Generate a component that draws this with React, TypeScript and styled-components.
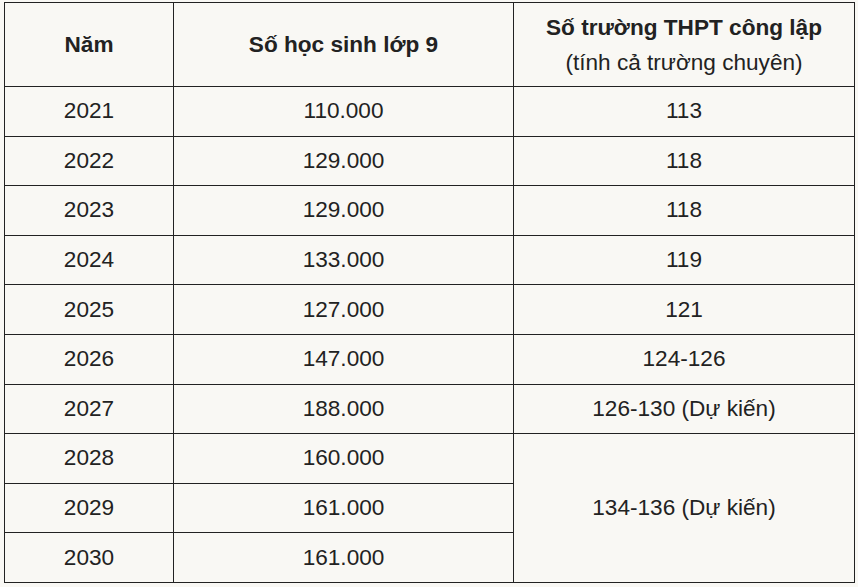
import React from "react";
import styled, { createGlobalStyle } from "styled-components";

const GlobalStyle = createGlobalStyle`
  html, body {
    margin: 0;
    padding: 0;
    background: #f9f8f4;
  }
  body {
    font-family: "Liberation Sans", Arial, sans-serif;
    color: #222;
  }
`;

const Wrapper = styled.div`
  width: 858px;
  height: 587px;
  padding: 2px 0 0 4px;
  box-sizing: border-box;
`;

const Table = styled.table`
  width: 850px;
  border-collapse: collapse;
  table-layout: fixed;
  font-size: 22.6px;
`;

const Col = styled.col<{ $w: number }>`
  width: ${(p) => p.$w}px;
`;

const HeadCell = styled.th`
  border: 1px solid #222;
  text-align: center;
  vertical-align: middle;
  padding: 0;
  font-weight: bold;
  height: 83px;
  line-height: 35px;
`;

const Cell = styled.td`
  border: 1px solid #222;
  text-align: center;
  vertical-align: middle;
  padding: 0;
  height: 48.6px;
`;

const Sub = styled.span`
  display: block;
  font-weight: normal;
`;

const rows = [
  ["2021", "110.000", "113"],
  ["2022", "129.000", "118"],
  ["2023", "129.000", "118"],
  ["2024", "133.000", "119"],
  ["2025", "127.000", "121"],
  ["2026", "147.000", "124-126"],
  ["2027", "188.000", "126-130 (Dự kiến)"],
  ["2028", "160.000", "134-136 (Dự kiến)"],
  ["2029", "161.000", null],
  ["2030", "161.000", null],
];

const App = () => {
  return (
    <Wrapper>
      <GlobalStyle />
      <Table>
        <colgroup>
          <Col $w={169} />
          <Col $w={340} />
          <Col $w={341} />
        </colgroup>
        <thead>
          <tr>
            <HeadCell>Năm</HeadCell>
            <HeadCell>Số học sinh lớp 9</HeadCell>
            <HeadCell>
              Số trường THPT công lập
              <Sub>(tính cả trường chuyên)</Sub>
            </HeadCell>
          </tr>
        </thead>
        <tbody>
          {rows.map((r, i) => (
            <tr key={r[0]}>
              <Cell>{r[0]}</Cell>
              <Cell>{r[1]}</Cell>
              {r[2] !== null && <Cell rowSpan={i === 7 ? 3 : 1}>{r[2]}</Cell>}
            </tr>
          ))}
        </tbody>
      </Table>
    </Wrapper>
  );
};

export default App;
